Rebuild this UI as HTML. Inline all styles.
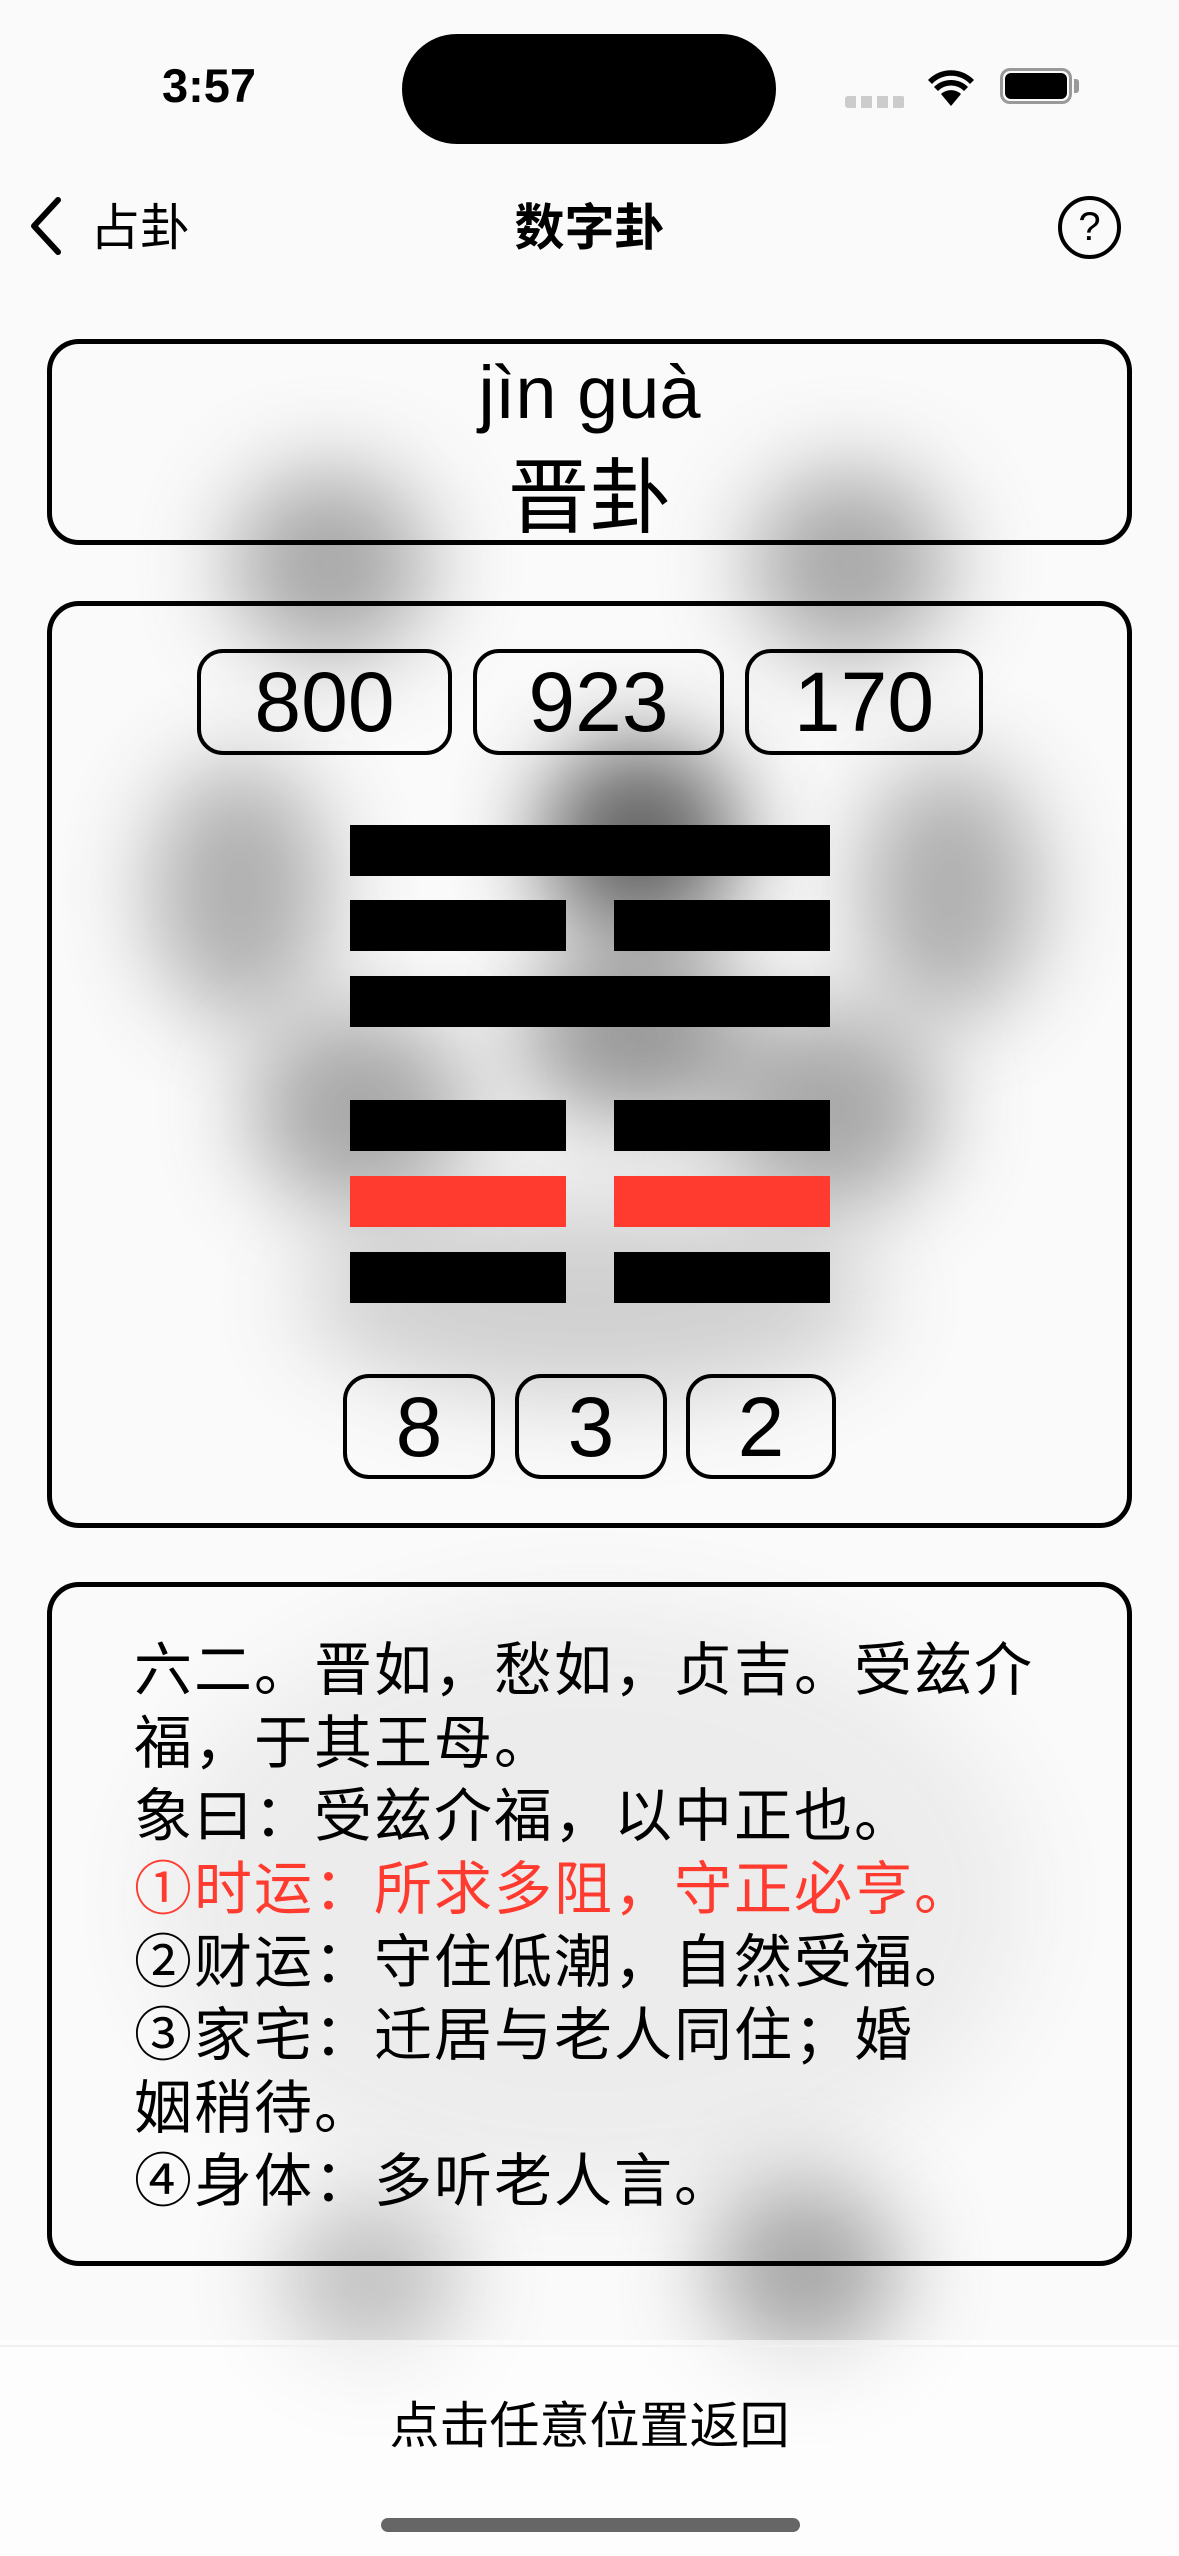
<!DOCTYPE html>
<html><head><meta charset="utf-8"><style>
*{margin:0;padding:0;box-sizing:border-box}
body{width:1179px;height:2556px;position:relative;overflow:hidden;background:#fafafa;font-family:"Liberation Sans","Noto Sans CJK SC",sans-serif;color:#000}
.blob{position:absolute;border-radius:50%;background:#555;filter:blur(45px)}
.abs{position:absolute}
.card{position:absolute;left:47px;width:1085px;border:5px solid #000;border-radius:32px}
.nb{position:absolute;border:4px solid #000;border-radius:26px;font-size:84px;text-align:center;line-height:98px}
.ln{position:absolute;height:51px;background:#000}
.red{background:#ff3b30}
.txt{position:absolute;left:134px;top:1634px;font-size:58px;line-height:73px;white-space:nowrap;letter-spacing:2px}
</style></head><body>
<div class="blob" style="left:230px;top:470px;width:200px;height:190px;opacity:.5"></div>
<div class="blob" style="left:750px;top:470px;width:200px;height:190px;opacity:.5"></div>
<div class="blob" style="left:150px;top:760px;width:180px;height:260px;opacity:.45"></div>
<div class="blob" style="left:860px;top:760px;width:180px;height:260px;opacity:.45"></div>
<div class="blob" style="left:540px;top:740px;width:200px;height:200px;opacity:.9"></div>
<div class="blob" style="left:520px;top:950px;width:230px;height:170px;opacity:.6"></div>
<div class="blob" style="left:250px;top:1010px;width:220px;height:200px;opacity:.5"></div>
<div class="blob" style="left:720px;top:1010px;width:220px;height:200px;opacity:.5"></div>
<div class="blob" style="left:300px;top:1200px;width:580px;height:200px;opacity:.25"></div>
<div class="blob" style="left:280px;top:2200px;width:180px;height:160px;opacity:.35"></div>
<div class="blob" style="left:710px;top:2180px;width:190px;height:180px;opacity:.5"></div>
<div class="blob" style="left:150px;top:1600px;width:880px;height:600px;opacity:.08"></div>

<div class="abs" style="left:162px;top:58px;font-size:47px;font-weight:bold">3:57</div>
<div class="abs" style="left:402px;top:34px;width:374px;height:110px;border-radius:55px;background:#000"></div>
<div class="abs" style="left:845px;top:96px;width:60px;height:12px;background:repeating-linear-gradient(90deg,#ccc 0 11px,transparent 11px 16px);border-radius:3px"></div>
<svg class="abs" style="left:925px;top:66px" width="52" height="42" viewBox="0 0 52 42"><path d="M26 40 L36 28 A15 15 0 0 0 16 28Z M9 21 A24 24 0 0 1 43 21 L39 25 A18 18 0 0 0 13 25Z M3 14 A32 32 0 0 1 49 14 L45 18 A26 26 0 0 0 7 18Z" fill="#000"/></svg>
<div class="abs" style="left:1000px;top:68px;width:72px;height:36px;border:3px solid #999;border-radius:10px"></div>
<div class="abs" style="left:1005px;top:73px;width:62px;height:26px;background:#000;border-radius:6px"></div>
<div class="abs" style="left:1074px;top:79px;width:5px;height:14px;background:#999;border-radius:0 3px 3px 0"></div>

<svg class="abs" style="left:24px;top:196px" width="40" height="60"><path d="M34 4 L10 30 L34 56" stroke="#000" stroke-width="6" fill="none" stroke-linecap="round" stroke-linejoin="round"/></svg>
<div class="abs" style="left:90px;top:188px;font-size:50px">占卦</div>
<div class="abs" style="left:0;width:1179px;top:188px;font-size:50px;font-weight:bold;text-align:center">数字卦</div>
<div class="abs" style="left:1058px;top:196px;width:63px;height:63px;border:4px solid #000;border-radius:50%;font-size:40px;text-align:center;line-height:55px">?</div>

<div class="card" style="top:339px;height:206px"></div>
<div class="abs" style="left:0;width:1179px;top:350px;font-size:74px;text-align:center">jìn guà</div>
<div class="abs" style="left:0;width:1179px;top:431px;font-size:82px;text-align:center">晋卦</div>

<div class="card" style="top:601px;height:927px"></div>
<div class="nb" style="left:197px;top:649px;width:255px;height:106px">800</div>
<div class="nb" style="left:473px;top:649px;width:251px;height:106px">923</div>
<div class="nb" style="left:745px;top:649px;width:238px;height:106px">170</div>
<div class="ln" style="left:350px;width:480px;top:825px"></div>
<div class="ln" style="left:350px;width:216px;top:900px"></div><div class="ln" style="left:614px;width:216px;top:900px"></div>
<div class="ln" style="left:350px;width:480px;top:976px"></div>
<div class="ln" style="left:350px;width:216px;top:1100px"></div><div class="ln" style="left:614px;width:216px;top:1100px"></div>
<div class="ln red" style="left:350px;width:216px;top:1176px"></div><div class="ln red" style="left:614px;width:216px;top:1176px"></div>
<div class="ln" style="left:350px;width:216px;top:1252px"></div><div class="ln" style="left:614px;width:216px;top:1252px"></div>
<div class="nb" style="left:343px;top:1374px;width:152px;height:105px">8</div>
<div class="nb" style="left:515px;top:1374px;width:152px;height:105px">3</div>
<div class="nb" style="left:686px;top:1374px;width:150px;height:105px">2</div>

<div class="card" style="top:1582px;height:684px"></div>
<div class="txt">六二。晋如，愁如，贞吉。受兹介<br>福，于其王母。<br>象曰：受兹介福，以中正也。<br><span style="color:#ff3b30">①时运：所求多阻，守正必亨。</span><br>②财运：守住低潮，自然受福。<br>③家宅：迁居与老人同住；婚<br>姻稍待。<br>④身体：多听老人言。</div>

<div class="abs" style="left:0;width:1179px;top:2345px;height:2px;background:#ddd"></div>
<div class="abs" style="left:0;width:1179px;top:2340px;height:216px;background:rgba(255,255,255,.6)"></div>
<div class="abs" style="left:0;width:1179px;top:2386px;font-size:50px;text-align:center">点击任意位置返回</div>
<div class="abs" style="left:381px;top:2518px;width:419px;height:14px;border-radius:7px;background:#666"></div>
</body></html>
